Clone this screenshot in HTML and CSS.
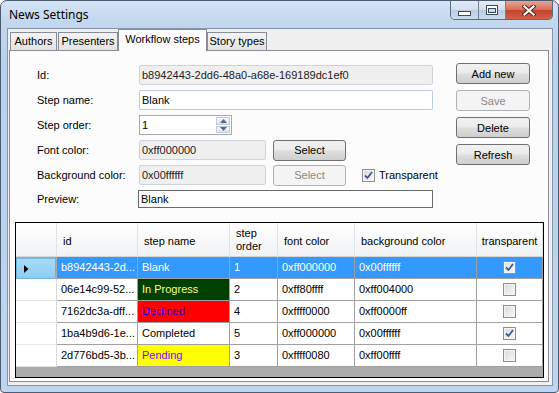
FILE: index.html
```html
<!DOCTYPE html>
<html>
    <head>
        <meta charset="utf-8" />
        <title>News Settings</title>
        <link rel="stylesheet" href="styles.css">
    </head>

    <body>
      <div class="window">

        <div class="titlebar">
            <span class="title">News Settings</span>
            <div class="caption">
                <span class="cap cap-min">
                    <svg width="13" height="5" viewBox="0 0 13 5"><rect x="0.5" y="0.5" width="12" height="4" fill="#fff" stroke="#3b4a5d"/></svg>
                </span>
                <span class="cap cap-max">
                    <svg width="12" height="10" viewBox="0 0 12 10"><rect x="0.5" y="0.5" width="11" height="9" fill="#fff" stroke="#3b4a5d"/><rect x="2.5" y="3.5" width="7" height="4" fill="#cbd8ea" stroke="#3b4a5d"/></svg>
                </span>
                <span class="cap cap-close">
                    <svg width="14" height="11" viewBox="0 0 14 11"><path d="M2.5 1.5 L11.5 9.5 M11.5 1.5 L2.5 9.5" stroke="#5a2218" stroke-width="4.2" stroke-linecap="square"/><path d="M2.5 1.5 L11.5 9.5 M11.5 1.5 L2.5 9.5" stroke="#fff" stroke-width="2.2" stroke-linecap="square"/></svg>
                </span>
            </div>
        </div>

        <div class="client">
            <div class="tabs">
                <span class="tab tab-authors">Authors</span>
                <span class="tab tab-presenters">Presenters</span>
                <span class="tab tab-active">Workflow steps</span>
                <span class="tab tab-types">Story types</span>
            </div>

            <div class="page">
                <div class="form">
                    <div class="fields">
                        <div class="row">
                            <label>Id:</label>
                            <div class="box box-ro box-long">b8942443-2dd6-48a0-a68e-169189dc1ef0</div>
                        </div>
                        <div class="row">
                            <label>Step name:</label>
                            <div class="box box-edit box-long">Blank</div>
                        </div>
                        <div class="row">
                            <label>Step order:</label>
                            <div class="numeric">
                                <span class="num-value">1</span>
                                <span class="spin">
                                    <span class="spin-btn"><svg width="7" height="4" viewBox="0 0 7 4"><path d="M0 4 L3.5 0 L7 4 Z" fill="#4c6a9c"/></svg></span>
                                    <span class="spin-btn"><svg width="7" height="4" viewBox="0 0 7 4"><path d="M0 0 L3.5 4 L7 0 Z" fill="#4c6a9c"/></svg></span>
                                </span>
                            </div>
                        </div>
                        <div class="row">
                            <label>Font color:</label>
                            <div class="box box-ro box-short">0xff000000</div>
                            <button class="btn btn-select">Select</button>
                        </div>
                        <div class="row">
                            <label>Background color:</label>
                            <div class="box box-ro box-short">0x00ffffff</div>
                            <button class="btn btn-select" disabled>Select</button>
                            <span class="check check-on"><svg width="9" height="9" viewBox="0 0 9 9"><path d="M1 4.5 L3.5 7 L8 1" fill="none" stroke="#3d5a93" stroke-width="1.8"/></svg></span>
                            <span class="check-label">Transparent</span>
                        </div>
                        <div class="row row-preview">
                            <label>Preview:</label>
                            <div class="preview">Blank</div>
                        </div>
                    </div>

                    <div class="actions">
                        <button class="btn">Add new</button>
                        <button class="btn" disabled>Save</button>
                        <button class="btn">Delete</button>
                        <button class="btn">Refresh</button>
                    </div>
                </div>

                <div class="grid">
                    <div class="grid-row grid-head">
                        <div class="hcell"></div>
                        <div class="hcell">id</div>
                        <div class="hcell">step name</div>
                        <div class="hcell hcell-two">step<br>order</div>
                        <div class="hcell">font color</div>
                        <div class="hcell">background color</div>
                        <div class="hcell hcell-center">transparent</div>
                    </div>

                    <div class="grid-row grid-selected">
                        <div class="rowhead rowhead-current"><svg width="5" height="8" viewBox="0 0 5 8"><path d="M0 0 L4.5 4 L0 8 Z" fill="#000"/></svg></div>
                        <div class="cell">b8942443-2d...</div>
                        <div class="cell">Blank</div>
                        <div class="cell">1</div>
                        <div class="cell">0xff000000</div>
                        <div class="cell">0x00ffffff</div>
                        <div class="cell cell-check"><span class="check check-on"><svg width="9" height="9" viewBox="0 0 9 9"><path d="M1 4.5 L3.5 7 L8 1" fill="none" stroke="#3d5a93" stroke-width="1.8"/></svg></span></div>
                    </div>

                    <div class="grid-row">
                        <div class="rowhead"></div>
                        <div class="cell">06e14c99-52...</div>
                        <div class="cell" style="background:#004000;color:#ffff80">In Progress</div>
                        <div class="cell">2</div>
                        <div class="cell">0xff80ffff</div>
                        <div class="cell">0xff004000</div>
                        <div class="cell cell-check"><span class="check"></span></div>
                    </div>

                    <div class="grid-row">
                        <div class="rowhead"></div>
                        <div class="cell">7162dc3a-dff...</div>
                        <div class="cell" style="background:#ff0000;color:#0000ff">Declined</div>
                        <div class="cell">4</div>
                        <div class="cell">0xffff0000</div>
                        <div class="cell">0xff0000ff</div>
                        <div class="cell cell-check"><span class="check"></span></div>
                    </div>

                    <div class="grid-row">
                        <div class="rowhead"></div>
                        <div class="cell">1ba4b9d6-1e...</div>
                        <div class="cell">Completed</div>
                        <div class="cell">5</div>
                        <div class="cell">0xff000000</div>
                        <div class="cell">0x00ffffff</div>
                        <div class="cell cell-check"><span class="check check-on"><svg width="9" height="9" viewBox="0 0 9 9"><path d="M1 4.5 L3.5 7 L8 1" fill="none" stroke="#3d5a93" stroke-width="1.8"/></svg></span></div>
                    </div>

                    <div class="grid-row">
                        <div class="rowhead"></div>
                        <div class="cell">2d776bd5-3b...</div>
                        <div class="cell" style="background:#ffff00;color:#8000ff">Pending</div>
                        <div class="cell">3</div>
                        <div class="cell">0xffff0080</div>
                        <div class="cell">0xff00ffff</div>
                        <div class="cell cell-check"><span class="check"></span></div>
                    </div>
                </div>
            </div>
        </div>
      </div>
    </body>
</html>
```

FILE: styles.css
```css
*{
    box-sizing: border-box;
}
body{
    margin: 0;
    background-color: #fff;
    font-family: "Liberation Sans", Arial, sans-serif;
    font-size: 11px;
    color: #000;
}
.window{
    width: 559px;
    height: 393px;
    border: 1px solid #4b5b70;
    border-radius: 7px 7px 4px 4px;
    background: linear-gradient(180deg, #d6e4f5 0px, #c3d7ef 20px, #bad1eb 60px, #bfd5ee 100%);
    display: flex;
    flex-direction: column;
    overflow: hidden;
}

/* title bar */
.titlebar{
    height: 27px;
    display: flex;
    align-items: flex-start;
    padding-left: 8px;
}
.title{
    font-family: "Noto Sans", sans-serif;
    font-size: 12px;
    line-height: 14px;
    margin-top: 7px;
}
.caption{
    margin-left: auto;
    margin-right: 5px;
    display: flex;
    height: 19px;
    border: 1px solid #5b6a80;
    border-top: none;
    border-radius: 0 0 5px 5px;
    overflow: hidden;
}
.cap{
    display: flex;
    justify-content: center;
    align-items: center;
    height: 100%;
}
.cap-min, .cap-max{
    width: 28px;
    border-right: 1px solid #6f7f94;
    background: linear-gradient(180deg, #e3ebf6 0%, #d3dfee 48%, #bccde4 52%, #cbdaed 100%);
}
.cap-max{
    width: 27px;
}
.cap-min svg{
    margin-top: 6px;
}
.cap-close{
    width: 46px;
    background: linear-gradient(180deg, #e7a493 0%, #d8705b 48%, #c3432c 52%, #d0604a 100%);
}

/* client area */
.client{
    flex: 1;
    margin: 0 5px 6px 6px;
    border: 1px solid #8595aa;
    background-color: #f0f0f0;
    display: flex;
    flex-direction: column;
}
.tabs{
    height: 21px;
    display: flex;
    align-items: flex-end;
    padding-left: 2px;
}
.tab{
    height: 18px;
    border: 1px solid #898c95;
    border-bottom: none;
    background: linear-gradient(180deg, #f4f4f4, #e3e3e3);
    text-align: center;
    line-height: 17px;
    margin-right: 1px;
}
.tab-authors{ width: 47px; }
.tab-presenters{ width: 60px; margin-right: 0; }
.tab-active{
    position: relative;
    z-index: 1;
    width: 89px;
    height: 22px;
    margin-bottom: -1px;
    background: #fcfcfc;
    line-height: 18px;
    margin-right: 0;
}
.tab-types{ width: 60px; }
.page{
    height: 332px;
    margin: 0 3px 0 1px;
    border: 1px solid #898c95;
    background-color: #fcfcfc;
}

/* form */
.form{
    height: 171px;
    display: flex;
}
.fields{
    width: 446px;
    flex-shrink: 0;
    padding: 14px 0 0 27px;
}
.row{
    display: flex;
    align-items: center;
    height: 20px;
    margin-bottom: 5px;
}
.row > *{
    flex-shrink: 0;
}
.row label{
    width: 102px;
    margin-top: -1px;
}
.row-preview{
    margin-top: 2px;
    height: 18px;
}
.box{
    height: 20px;
    border: 1px solid #d0d4da;
    border-radius: 2px;
    padding-left: 2px;
    line-height: 18px;
}
.box-ro{
    background-color: #efefef;
    color: #222;
}
.box-edit{
    background-color: #fff;
    border-color: #b7cbe3;
}
.box-long{ width: 294px; }
.box-short{ width: 127px; }
.numeric{
    width: 93px;
    height: 20px;
    border: 1px solid #a5a8ad;
    background-color: #fff;
    display: flex;
    align-items: center;
    padding: 1px;
}
.num-value{
    padding-left: 1px;
}
.spin{
    margin-left: auto;
    width: 14px;
    height: 100%;
    display: flex;
    flex-direction: column;
    gap: 1px;
}
.spin-btn{
    flex: 1;
    display: flex;
    justify-content: center;
    align-items: center;
    border: 1px solid #c6cbd3;
    background: linear-gradient(180deg, #f4f6f9, #dfe4eb);
}
.btn{
    width: 74px;
    height: 21px;
    border: 1px solid #707070;
    border-radius: 3px;
    background: linear-gradient(180deg, #f2f2f2 0%, #ebebeb 45%, #dddddd 55%, #cfcfcf 100%);
    font-family: "Liberation Sans", Arial, sans-serif;
    font-size: 11px;
    color: #000;
    padding: 0;
}
.btn:disabled{
    border-color: #adb2b5;
    background: #f4f4f4;
    color: #8a8a8a;
}
.btn-select{
    width: 73px;
    margin-left: 7px;
}
.check{
    width: 13px;
    height: 13px;
    border: 1px solid #8f8f8f;
    background: linear-gradient(135deg, #d9dbde, #f8f8f8);
    box-shadow: inset 0 0 0 1px #f4f4f4;
    display: inline-flex;
    justify-content: center;
    align-items: center;
}
.row .check{
    margin-left: 16px;
    margin-top: 1px;
}
.check-label{
    margin-left: 4px;
}
.preview{
    width: 295px;
    height: 18px;
    margin-left: -1px;
    border: 1px solid #6a6a6a;
    background-color: #fff;
    padding-left: 2px;
    line-height: 16px;
}
.actions{
    display: flex;
    flex-direction: column;
    gap: 6px;
    padding-top: 12px;
}

/* grid */
.grid{
    width: 529px;
    height: 156px;
    margin-left: 5px;
    border: 1px solid #000;
    background-color: #ababab;
}
.grid-row{
    display: grid;
    grid-template-columns: 41px 81px 92px 48px 77px 122px 66px;
    height: 22px;
}
.grid-head{
    height: 34px;
}
.hcell{
    background: linear-gradient(180deg, #ffffff, #f1f2f4);
    border-right: 1px solid #e1e3e6;
    border-bottom: 1px solid #d5d5d5;
    display: flex;
    align-items: center;
    padding: 2px 0 0 6px;
    white-space: nowrap;
}
.hcell-two{
    line-height: 13px;
    padding-top: 0;
}
.hcell-center{
    justify-content: center;
    padding-left: 0;
}
.rowhead{
    background-color: #fff;
    border-right: 1px solid #d9d9d9;
    border-bottom: 1px solid #e6e6e6;
    display: flex;
    align-items: center;
    padding-left: 7px;
}
.rowhead-current{
    background: linear-gradient(180deg, #a6dbf8, #8dcdf2);
    border: 1px solid #6fb3de;
    margin: 1px 1px 0 0;
}
.cell{
    background-color: #fff;
    border-right: 1px solid #a0a0a0;
    border-bottom: 1px solid #a0a0a0;
    padding-left: 4px;
    line-height: 21px;
    white-space: nowrap;
    overflow: hidden;
}
.grid-selected .cell{
    background-color: #3399ff;
    color: #fff;
}
.cell-check{
    display: flex;
    justify-content: center;
    align-items: center;
    padding-left: 0;
}
.grid-selected .cell-check .check{
    border-color: #8f8f8f;
}
```
